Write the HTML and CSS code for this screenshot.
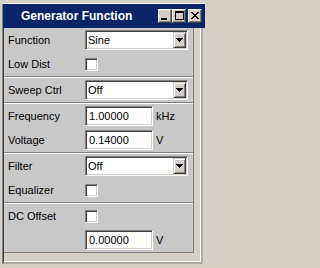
FILE: index.html
```html
<!DOCTYPE html>
<html>
<head>
<meta charset="utf-8">
<link rel="stylesheet" href="styles.css">
</head>
<body>
<div class="window">
  <div class="titlebar">
    <span class="title">Generator Function</span>
    <div class="tbtns">
      <span class="tbtn"><svg width="12" height="12" viewBox="0 0 12 12" shape-rendering="crispEdges"><rect x="2" y="8" width="6" height="2" fill="#000"/></svg></span>
      <span class="tbtn"><svg width="12" height="12" viewBox="0 0 12 12" shape-rendering="crispEdges"><path d="M2 1h9v9h-9z M3 3v6h7v-6z" fill="#000" fill-rule="evenodd"/></svg></span>
      <span class="tbtn close"><svg width="12" height="12" viewBox="0 0 12 12" shape-rendering="crispEdges"><path d="M2 2h2v1h1v1h2v-1h1v-1h2v1h-1v1h-1v1h-1v1h1v1h1v1h1v1h-2v-1h-1v-1h-2v1h-1v1h-2v-1h1v-1h1v-1h1v-1h-1v-1h-1v-1h-1z" fill="#000"/></svg></span>
    </div>
  </div>
  <div class="client">
    <div class="edge">
      <div class="panel">
        <div class="group">
          <div class="row"><span class="label">Function</span><div class="combo"><span class="val">Sine</span><span class="dbtn"><svg width="7" height="4" viewBox="0 0 7 4" shape-rendering="crispEdges"><path d="M0 0h7v1h-1v1h-1v1h-1v1h-1v-1h-1v-1h-1v-1h-1z" fill="#000"/></svg></span></div></div>
          <div class="row"><span class="label">Low Dist</span><span class="check"></span></div>
        </div>
        <div class="sep"></div>
        <div class="group">
          <div class="row"><span class="label">Sweep Ctrl</span><div class="combo"><span class="val">Off</span><span class="dbtn"><svg width="7" height="4" viewBox="0 0 7 4" shape-rendering="crispEdges"><path d="M0 0h7v1h-1v1h-1v1h-1v1h-1v-1h-1v-1h-1v-1h-1z" fill="#000"/></svg></span></div></div>
        </div>
        <div class="sep"></div>
        <div class="group">
          <div class="row"><span class="label">Frequency</span><span class="field">1.00000</span><span class="unit">kHz</span></div>
          <div class="row"><span class="label">Voltage</span><span class="field">0.14000</span><span class="unit">V</span></div>
        </div>
        <div class="sep"></div>
        <div class="group">
          <div class="row"><span class="label">Filter</span><div class="combo"><span class="val">Off</span><span class="dbtn"><svg width="7" height="4" viewBox="0 0 7 4" shape-rendering="crispEdges"><path d="M0 0h7v1h-1v1h-1v1h-1v1h-1v-1h-1v-1h-1v-1h-1z" fill="#000"/></svg></span></div></div>
          <div class="row"><span class="label">Equalizer</span><span class="check"></span></div>
        </div>
        <div class="sep"></div>
        <div class="group">
          <div class="row"><span class="label">DC Offset</span><span class="check"></span></div>
          <div class="row"><span class="label"></span><span class="field">0.00000</span><span class="unit">V</span></div>
        </div>
      </div>
    </div>
  </div>
</div>
</body>
</html>
```
FILE: styles.css
```css
* { box-sizing: border-box; }
html, body { margin: 0; padding: 0; }
body {
  background: #d4d0c8;
  font-family: "Liberation Sans", Arial, sans-serif;
  font-size: 11px;
  color: #000;
  width: 207px;
  height: 268px;
  overflow: hidden;
}
.window {
  margin: 3px 0 0 2px;
  width: 203px;
  border-left: 1px solid #808080;
  border-top: 1px solid #ffffff;
}
.titlebar {
  height: 24px;
  background: #0a246a;
  display: flex;
  align-items: center;
  padding-left: 18px;
  padding-right: 3px;
}
.title {
  flex: 1;
  color: #fff;
  font-weight: bold;
  font-size: 12px;
  white-space: nowrap;
}
.tbtns { display: flex; }
.tbtn {
  width: 14px;
  height: 14px;
  background: #d4d0c8;
  border-top: 1px solid #fff;
  border-left: 1px solid #fff;
  border-right: 1px solid #404040;
  border-bottom: 1px solid #404040;
  box-shadow: inset -1px -1px 0 #808080;
  display: flex;
}
.tbtn svg { display: block; }
.close { margin-left: 2px; }
.client {
  width: 200px;
  height: 236px;
  border-left: 1px solid #404040;
  border-right: 2px solid #b0aca4;
  border-bottom: 2px solid #b0aca4;
}
.edge {
  height: 100%;
  border-right: 1px solid #fff;
  border-bottom: 1px solid #fff;
}
.panel {
  width: 190px;
  height: 225px;
  background: #c8c8c8;
  border-right: 1px solid #808080;
  border-bottom: 1px solid #808080;
}
.row {
  height: 24px;
  display: flex;
  align-items: center;
}
.label {
  width: 81px;
  padding-left: 4px;
  white-space: nowrap;
}
.sep {
  height: 2px;
  border-top: 1px solid #808080;
  border-bottom: 1px solid #fff;
}
.combo, .field, .check {
  background: #fff;
  border-top: 1px solid #808080;
  border-left: 1px solid #808080;
  border-right: 1px solid #fff;
  border-bottom: 1px solid #fff;
  box-shadow: inset 1px 1px 0 #404040, inset -1px -1px 0 #d4d0c8;
}
.combo {
  width: 103px;
  height: 20px;
  padding: 1px;
  display: flex;
  align-items: stretch;
}
.val {
  flex: 1;
  padding-left: 1px;
  line-height: 16px;
}
.dbtn {
  width: 13px;
  background: #d4d0c8;
  border-top: 1px solid #d4d0c8;
  border-left: 1px solid #d4d0c8;
  border-right: 1px solid #404040;
  border-bottom: 1px solid #404040;
  box-shadow: inset 1px 1px 0 #fff, inset -1px -1px 0 #808080;
  display: flex;
  align-items: center;
  justify-content: center;
}
.dbtn svg { display: block; }
.field {
  width: 68px;
  height: 20px;
  padding-left: 3px;
  line-height: 18px;
}
.check {
  width: 13px;
  height: 13px;
}
.unit {
  margin-left: 3px;
}
```
